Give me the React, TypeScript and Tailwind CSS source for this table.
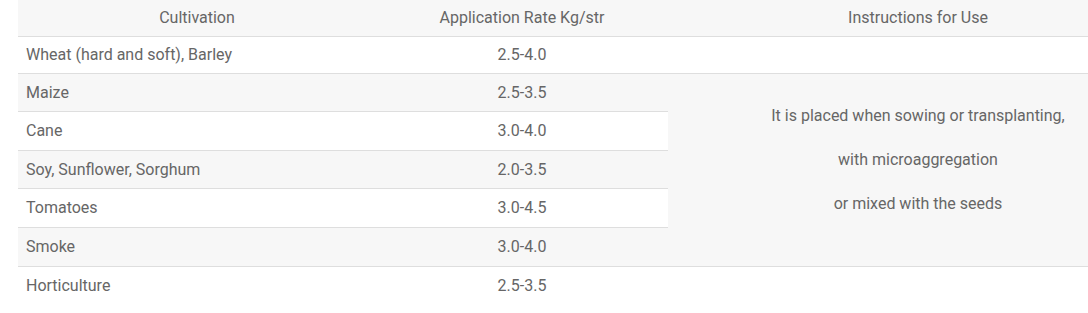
const rows = [
  { name: "Wheat (hard and soft), Barley", rate: "2.5-4.0", h: "h-[37px]", gray: false },
  { name: "Maize", rate: "2.5-3.5", h: "h-[38px]", gray: true },
  { name: "Cane", rate: "3.0-4.0", h: "h-[39px]", gray: false },
  { name: "Soy, Sunflower, Sorghum", rate: "2.0-3.5", h: "h-[38px]", gray: true },
  { name: "Tomatoes", rate: "3.0-4.5", h: "h-[39px]", gray: false },
  { name: "Smoke", rate: "3.0-4.0", h: "h-[39px]", gray: true },
  { name: "Horticulture", rate: "2.5-3.5", h: "h-[38px]", gray: false },
];

const instructions = [
  "It is placed when sowing or transplanting,",
  "with microaggregation",
  "or mixed with the seeds",
];

export default function App() {
  return (
    <div
      className="w-[1088px] h-[313px] overflow-hidden bg-white pl-[18px] text-[16px] text-[#666]"
      style={{ fontFamily: "Roboto, 'Liberation Sans', sans-serif" }}
    >
      <div className="grid w-[1150px] grid-cols-[358px_292px_500px]">
        {/* header */}
        <div className="h-[36px] bg-[#f7f7f7] flex items-center justify-center">Cultivation</div>
        <div className="h-[36px] bg-[#f7f7f7] flex items-center justify-center">Application Rate Kg/str</div>
        <div className="h-[36px] bg-[#f7f7f7] flex items-center justify-center">Instructions for Use</div>

        {rows.map((r, i) => {
          const bg = r.gray ? "bg-[#f7f7f7]" : "bg-white";
          return [
            <div key={`n${i}`} className={`${r.h} ${bg} border-t border-[#dedede] flex items-center px-2`}>
              {r.name}
            </div>,
            <div key={`r${i}`} className={`${r.h} ${bg} border-t border-[#dedede] flex items-center justify-center`}>
              {r.rate}
            </div>,
            i === 0 || i === 6 ? (
              <div key={`e${i}`} className={`${r.h} bg-white border-t border-[#dedede]`} />
            ) : i === 1 ? (
              <div
                key="inst"
                className="row-span-5 bg-[#f7f7f7] border-t border-[#dedede] flex flex-col items-center gap-[22px] pt-[31px] leading-[22px]"
              >
                {instructions.map((t) => (
                  <p key={t}>{t}</p>
                ))}
              </div>
            ) : null,
          ];
        })}
      </div>
    </div>
  );
}
